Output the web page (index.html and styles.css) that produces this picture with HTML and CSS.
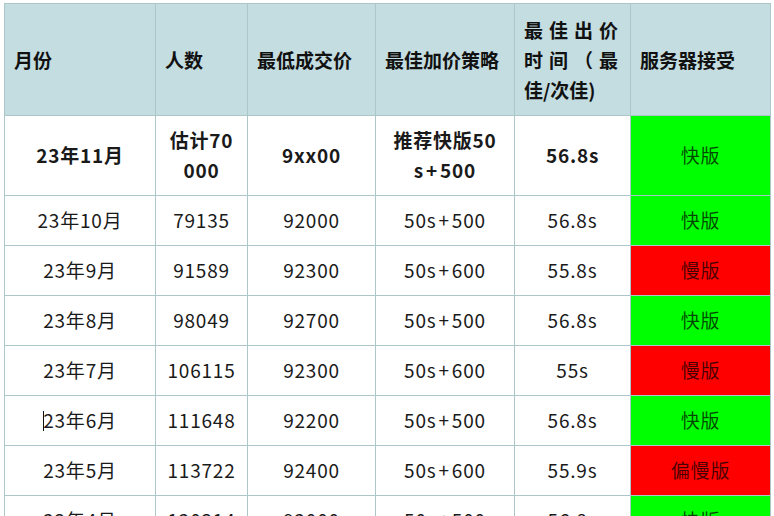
FILE: index.html
```html
<!DOCTYPE html>
<html lang="zh-CN">
<head>
<meta charset="utf-8">
<title>服务器接受</title>
<link rel="stylesheet" href="styles.css">
</head>
<body>
<table class="sheet">
  <colgroup>
    <col class="c1"><col class="c2"><col class="c3"><col class="c4"><col class="c5"><col class="c6">
  </colgroup>
  <thead>
    <tr class="head">
      <th>月份</th>
      <th>人数</th>
      <th>最低成交价</th>
      <th>最佳加价策略</th>
      <th class="just">最佳出价时间（最佳/次佳)</th>
      <th>服务器接受</th>
    </tr>
  </thead>
  <tbody>
    <tr class="first">
      <td>23年11月</td>
      <td>估计70<br>000</td>
      <td>9xx00</td>
      <td>推荐快版50<br>s<span class="plus">+</span>500</td>
      <td>56.8s</td>
      <td class="fast">快版</td>
    </tr>
    <tr class="row">
      <td>23年10月</td><td>79135</td><td>92000</td><td>50s<span class="plus">+</span>500</td><td>56.8s</td><td class="fast">快版</td>
    </tr>
    <tr class="row">
      <td>23年9月</td><td>91589</td><td>92300</td><td>50s<span class="plus">+</span>600</td><td>55.8s</td><td class="slow">慢版</td>
    </tr>
    <tr class="row">
      <td>23年8月</td><td>98049</td><td>92700</td><td>50s<span class="plus">+</span>500</td><td>56.8s</td><td class="fast">快版</td>
    </tr>
    <tr class="row">
      <td>23年7月</td><td>106115</td><td>92300</td><td>50s<span class="plus">+</span>600</td><td>55s</td><td class="slow">慢版</td>
    </tr>
    <tr class="row">
      <td><span class="caret"></span>23年6月</td><td>111648</td><td>92200</td><td>50s<span class="plus">+</span>500</td><td>56.8s</td><td class="fast">快版</td>
    </tr>
    <tr class="row">
      <td>23年5月</td><td>113722</td><td>92400</td><td>50s<span class="plus">+</span>600</td><td>55.9s</td><td class="slow">偏慢版</td>
    </tr>
    <tr class="row">
      <td>23年4月</td><td>120314</td><td>92000</td><td>50s<span class="plus">+</span>500</td><td>56.8s</td><td class="fast">快版</td>
    </tr>
  </tbody>
</table>
</body>
</html>
```

FILE: styles.css
```css
html, body {
  margin: 0;
  padding: 0;
  background: #ffffff;
  overflow: hidden;
}

body {
  font-family: "Noto Sans CJK SC", "Noto Sans", sans-serif;
  color: #1a1a1a;
}

.sheet {
  border-collapse: collapse;
  table-layout: fixed;
  width: 766px;
  margin: 3px 0 0 4px;
  font-size: 19px;
}

.c1 { width: 151px; }
.c2 { width: 92px; }
.c3 { width: 128px; }
.c4 { width: 139px; }
.c5 { width: 116px; }
.c6 { width: 140px; }

.sheet th,
.sheet td {
  border: 1px solid #acc6ca;
  padding: 0 10px;
  vertical-align: middle;
  line-height: 30px;
}

.head {
  height: 112px;
}

.head th {
  background: #c4dde1;
  color: #111;
  font-weight: 700;
  text-align: left;
  padding-left: 9px;
}

.head th.just {
  text-align: justify;
  padding: 0 12px 0 9px;
}

.sheet td {
  text-align: center;
  letter-spacing: 0.8px;
  padding-bottom: 2px;
}

.plus {
  margin: 0 2px;
}

.first {
  height: 80px;
}

.first td {
  font-weight: 700;
}

.first td.fast {
  font-weight: 400;
}

.row {
  height: 50px;
}

.fast {
  background: #00ff00;
  color: rgba(0, 0, 0, 0.72);
}

.slow {
  background: #ff0000;
  color: rgba(0, 0, 0, 0.72);
}

.caret {
  display: inline-block;
  width: 1px;
  height: 20px;
  background: #111;
  vertical-align: -3px;
  margin-right: -1px;
}
```
